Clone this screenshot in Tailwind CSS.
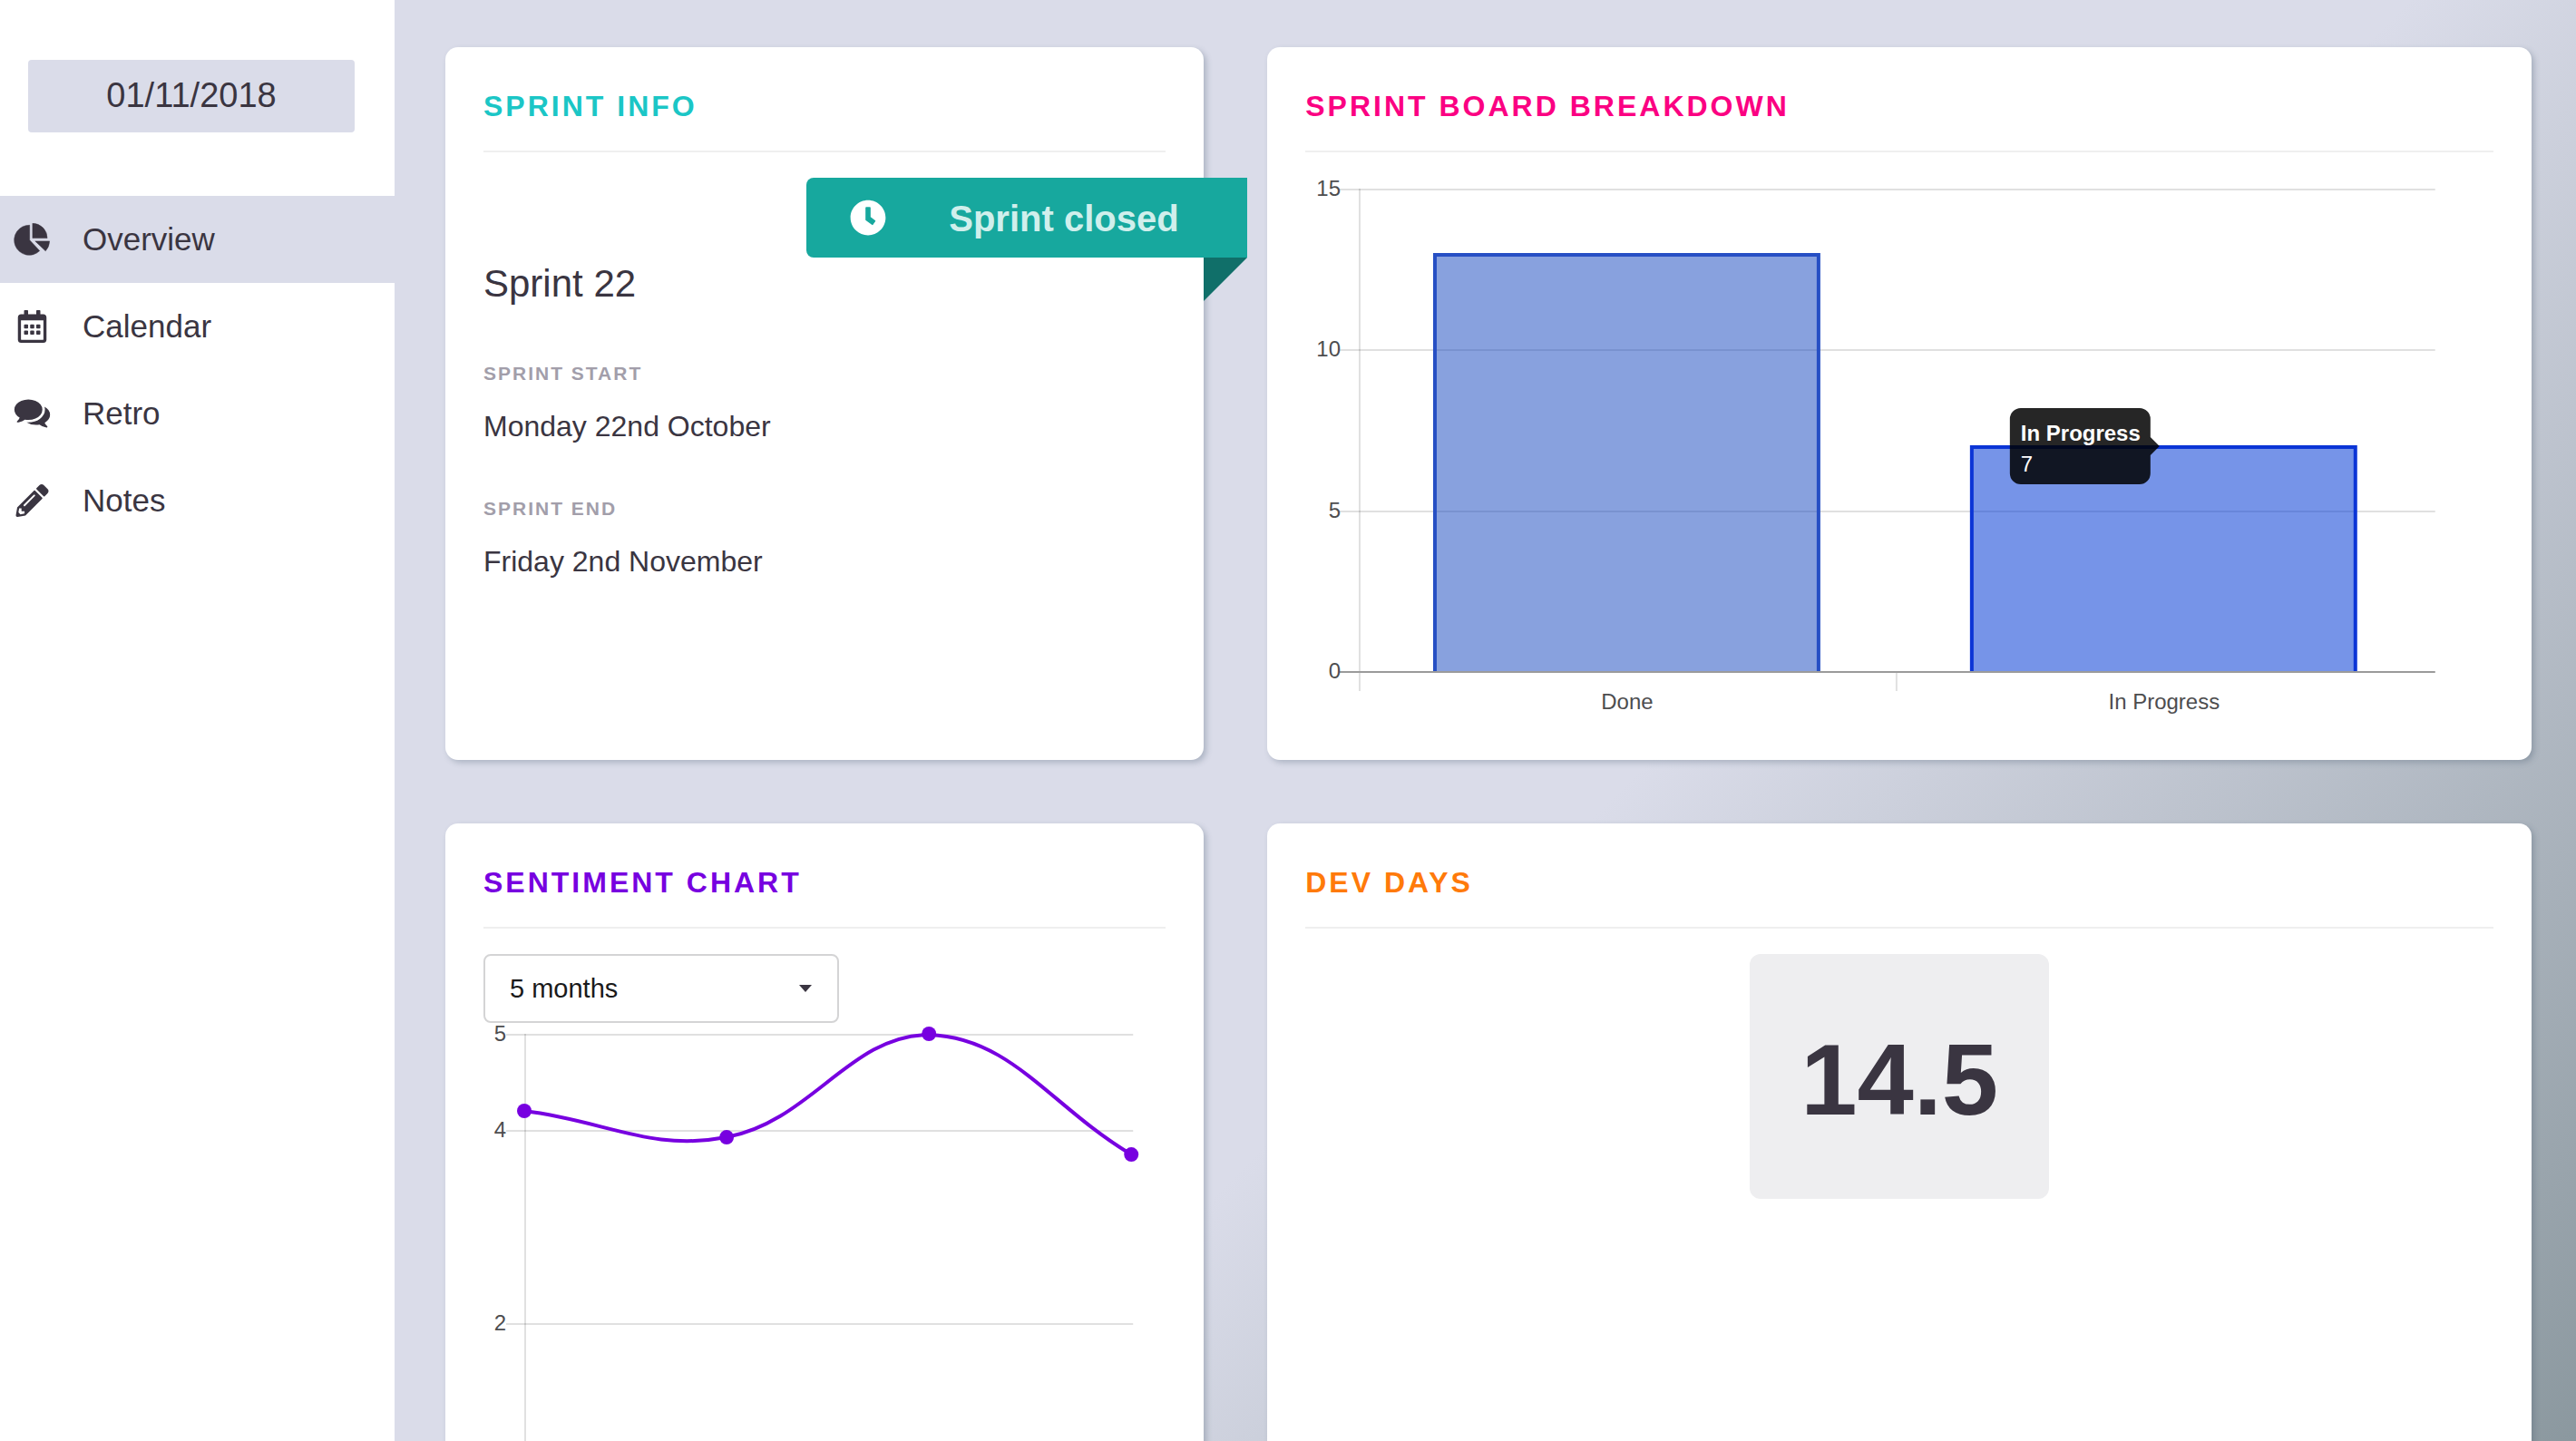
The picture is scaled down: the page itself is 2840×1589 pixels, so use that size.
<!DOCTYPE html>
<html lang="en">
<head>
<meta charset="utf-8">
<meta name="viewport" content="width=device-width, initial-scale=1">
<title>Sprint dashboard</title>
<script src="https://cdn.jsdelivr.net/npm/@tailwindcss/browser@4"></script>
</head>
<body class="flex h-screen overflow-hidden bg-[linear-gradient(135deg,#dadce9_60%,#8b989f_100%)] font-['Liberation_Sans',Arial,sans-serif] text-[#3a3541]">

<aside class="w-[435px] shrink-0 bg-white pt-[66px]">
  <div class="px-[31px] pr-[44px]">
    <input type="text" value="01/11/2018" aria-label="Date" class="block h-20 w-full rounded bg-[#dadce9] pb-0.5 text-center text-[38px]">
  </div>
  <nav class="mt-[70px] text-[35px]">
    <a href="#overview" class="flex h-24 items-center gap-[33px] bg-[#dadce9] pl-[13px]">
      <svg class="h-9 w-[45px]" viewBox="0 0 39 36" fill="currentColor" stroke="currentColor" stroke-width=".5" stroke-linejoin="round" aria-hidden="true"><path d="M16.700 2.300V18.800L27.700 30.600A16.500 16.500 0 1 1 16.700 2.300zM19.900.3V16.600H36.100A16.300 16.300 0 0 0 19.900.3zM22.800 19.900H38.600A17 17 0 0 1 34.200 30.800z"/></svg>
      <span>Overview</span>
    </a>
    <a href="#calendar" class="flex h-24 items-center gap-[33px] pl-[13px]">
      <svg class="h-9 w-[45px]" viewBox="0 0 448 512" fill="currentColor" aria-hidden="true"><path d="M148 288h-40c-6.600 0-12-5.400-12-12v-40c0-6.600 5.400-12 12-12h40c6.600 0 12 5.400 12 12v40c0 6.600-5.400 12-12 12zm108-12v-40c0-6.600-5.400-12-12-12h-40c-6.600 0-12 5.400-12 12v40c0 6.600 5.400 12 12 12h40c6.600 0 12-5.400 12-12zm96 0v-40c0-6.600-5.400-12-12-12h-40c-6.600 0-12 5.400-12 12v40c0 6.600 5.400 12 12 12h40c6.600 0 12-5.400 12-12zm-96 96v-40c0-6.600-5.400-12-12-12h-40c-6.600 0-12 5.400-12 12v40c0 6.600 5.400 12 12 12h40c6.600 0 12-5.400 12-12zm-96 0v-40c0-6.600-5.400-12-12-12h-40c-6.600 0-12 5.400-12 12v40c0 6.600 5.400 12 12 12h40c6.600 0 12-5.400 12-12zm192 0v-40c0-6.600-5.400-12-12-12h-40c-6.600 0-12 5.400-12 12v40c0 6.600 5.400 12 12 12h40c6.600 0 12-5.400 12-12zm96-260v352c0 26.500-21.500 48-48 48H48c-26.500 0-48-21.500-48-48V112c0-26.500 21.500-48 48-48h48V12c0-6.600 5.400-12 12-12h40c6.600 0 12 5.400 12 12v52h128V12c0-6.600 5.400-12 12-12h40c6.600 0 12 5.400 12 12v52h48c26.500 0 48 21.500 48 48zm-48 346V160H48v298c0 3.300 2.700 6 6 6h340c3.300 0 6-2.700 6-6z"/></svg>
      <span>Calendar</span>
    </a>
    <a href="#retro" class="flex h-24 items-center gap-[33px] pl-[13px]">
      <svg class="h-9 w-[45px]" viewBox="0 141 1792 1640" fill="currentColor" aria-hidden="true"><path d="M1408 768q0 139-94 257t-256.500 186.500-353.500 68.500q-86 0-176-16-124 88-278 128-36 9-86 16h-3q-11 0-20.500-8t-11.500-21q-1-3-1-6.500t.5-6.500 2-6l2.500-5 3.500-5.500 4-5 4.500-5 4-4.500q5-6 23-25t26-29.500 22.500-29 25-38.500 20.500-44q-124-72-195-177t-71-224q0-139 94-257t256.500-186.500 353.500-68.500 353.500 68.500 256.500 186.500 94 257zm384 256q0 120-71 224.500t-195 176.500q10 24 20.500 44t25 38.500 22.500 29 26 29.500 23 25q1 1 4 4.500t4.500 5 4 5 3.500 5.500l2.500 5 2 6 .5 6.500-1 6.500q-3 14-13 22t-22 7q-50-7-86-16-154-40-278-128-90 16-176 16-271 0-472-132 58 4 88 4 161 0 309-45t264-129q125-92 192-212t67-254q0-77-23-152 129 71 204 178t75 230z"/></svg>
      <span>Retro</span>
    </a>
    <a href="#notes" class="flex h-24 items-center gap-[33px] pl-[13px]">
      <svg class="h-9 w-[45px]" viewBox="0 0 512 512" fill="currentColor" aria-hidden="true"><path d="M497.900 142.100l-46.100 46.100c-4.700 4.700-12.300 4.700-17 0l-111-111c-4.700-4.700-4.700-12.300 0-17l46.100-46.100c18.700-18.700 49.100-18.700 67.900 0l60.100 60.100c18.800 18.700 18.800 49.100 0 67.900zM284.200 99.800L21.600 362.400.4 483.900c-2.900 16.400 11.400 30.600 27.800 27.800l121.500-21.300 262.600-262.600c4.700-4.700 4.700-12.300 0-17l-111-111c-4.800-4.700-12.400-4.700-17.100 0zM124.100 339.900c-5.500-5.500-5.500-14.300 0-19.800l154-154c5.500-5.500 14.300-5.500 19.800 0s5.500 14.300 0 19.800l-154 154c-5.500 5.500-14.300 5.500-19.800 0zM88 424h48v36.300l-64.500 11.300-31.100-31.100L51.700 376H88v48z"/></svg>
      <span>Notes</span>
    </a>
  </nav>
</aside>

<main class="grid min-w-0 flex-1 grid-cols-[3fr_5fr] content-start gap-[70px] pt-[52px] pr-[49px] pl-14">

  <section class="relative rounded-[14px] bg-white p-[42px] shadow-[3px_3px_6px_rgba(70,90,110,0.3)]">
    <h2 class="border-b-2 border-[#efefef] pb-[26px] text-[32px] leading-[46px] font-bold tracking-[3px] text-[#1bc6c6]">SPRINT INFO</h2>
    <p class="mt-[120px] text-[42px] leading-[50px]">Sprint 22</p>
    <dl class="mt-[62px]">
      <dt class="text-[21px] leading-6 font-bold tracking-[2px] text-[#a29eaa]">SPRINT START</dt>
      <dd class="mt-[26px] text-[32px] leading-10">Monday 22nd October</dd>
      <dt class="mt-[59px] text-[21px] leading-6 font-bold tracking-[2px] text-[#a29eaa]">SPRINT END</dt>
      <dd class="mt-[26px] text-[32px] leading-10">Friday 2nd November</dd>
    </dl>
    <div class="absolute top-36 -right-12 flex h-[88px] w-[486px] items-center rounded-l-lg bg-[#17a89e] pl-12">
      <svg class="size-10" viewBox="0 0 512 512" fill="#fff" aria-hidden="true"><path d="M256,8C119,8,8,119,8,256S119,504,256,504,504,393,504,256,393,8,256,8Zm57.100,350.100L224.900,294c-3.100-2.300-4.900-5.900-4.900-9.700V116a12,12,0,0,1,12-12h48a12,12,0,0,1,12,12V247.700l63.500,46.200a12,12,0,0,1,2.600,16.800l-28.200,38.800A12,12,0,0,1,313.100,358.100Z"/></svg>
      <span class="ml-[69px] pt-0.5 text-[40px] font-bold text-[#d0efec]">Sprint closed</span>
      <svg class="absolute top-full right-0 size-12" viewBox="0 0 48 48" aria-hidden="true"><path d="M0 0h48L0 48z" fill="#106f69"/></svg>
    </div>
  </section>

  <section class="rounded-[14px] bg-white p-[42px] shadow-[3px_3px_6px_rgba(70,90,110,0.3)]">
    <h2 class="border-b-2 border-[#efefef] pb-[26px] text-[32px] leading-[46px] font-bold tracking-[3px] text-[#fb0082]">SPRINT BOARD BREAKDOWN</h2>
    <svg class="block h-auto w-full text-[24px]" viewBox="0 0 1310 628" role="img" aria-label="Sprint board breakdown bar chart">
      <g stroke="#000" stroke-opacity=".12" stroke-width="2">
        <path d="M38 41H1246M38 218H1246M38 396H1246"/>
        <path d="M60 40V594M652 574V594"/>
      </g>
      <path d="M38 573H1246" stroke="#9b9b9b" stroke-width="2"/>
      <g fill="#4d4d4f" text-anchor="end">
        <text x="39" y="48">15</text><text x="39" y="225">10</text><text x="39" y="403">5</text><text x="39" y="580">0</text>
      </g>
      <g fill="#4d4d4f" text-anchor="middle">
        <text x="355" y="614">Done</text><text x="947" y="614">In Progress</text>
      </g>
      <path d="M143 572V113H566V572" fill="#1244be" fill-opacity=".5" stroke="#264fc4" stroke-width="4"/>
      <path d="M735 572V325H1158V572" fill="#0239d4" fill-opacity=".54" stroke="#0b35d6" stroke-width="4"/>
      <path d="M789 282h131a12 12 0 0 1 12 12v20l10 10-10 10v20a12 12 0 0 1-12 12H789a12 12 0 0 1-12-12V294a12 12 0 0 1 12-12z" fill="#000" fill-opacity=".85"/>
      <text x="789" y="318" fill="#fff" class="font-bold">In Progress</text>
      <text x="789" y="352" fill="#fff">7</text>
    </svg>
  </section>

  <section class="rounded-[14px] bg-white p-[42px] shadow-[3px_3px_6px_rgba(70,90,110,0.3)]">
    <h2 class="border-b-2 border-[#efefef] pb-[26px] text-[32px] leading-[46px] font-bold tracking-[3px] text-[#7700e0]">SENTIMENT CHART</h2>
    <div class="relative mt-7 w-[392px]">
      <select aria-label="Period" class="block h-[76px] w-full appearance-none rounded-lg border-2 border-[#d4d4d5] bg-white pt-0.5 pl-[27px] text-[29px] text-[#1a1a1b]">
        <option selected>5 months</option>
        <option>12 months</option>
      </select>
      <svg class="pointer-events-none absolute top-[34px] right-[30px] h-2 w-3.5" viewBox="0 0 14 8" aria-hidden="true"><path d="M0 0h14L7 8z" fill="#3a3541"/></svg>
    </div>
    <svg class="block h-auto w-full overflow-visible text-[24px]" viewBox="0 0 752 600" role="img" aria-label="Sentiment over time">
      <g stroke="#000" stroke-opacity=".12" stroke-width="2">
        <path d="M25 13H716M25 119H716M25 332H716M25 545H716"/>
        <path d="M46 12V566"/>
      </g>
      <g fill="#4d4d4f" text-anchor="end">
        <text x="25" y="20">5</text><text x="25" y="126">4</text><text x="25" y="339">2</text>
      </g>
      <path d="M45 97C135 108 184 142 268 126C362 108 404 13 491 13C582 16 625 92 714 145" fill="none" stroke="#7700e0" stroke-width="4"/>
      <g fill="#7700e0">
        <circle cx="45" cy="97" r="8"/><circle cx="268" cy="126" r="8"/><circle cx="491" cy="12" r="8"/><circle cx="714" cy="145" r="8"/>
      </g>
    </svg>
  </section>

  <section class="rounded-[14px] bg-white p-[42px] shadow-[3px_3px_6px_rgba(70,90,110,0.3)]">
    <h2 class="border-b-2 border-[#efefef] pb-[26px] text-[32px] leading-[46px] font-bold tracking-[3px] text-[#ff7a0a]">DEV DAYS</h2>
    <div class="mx-auto mt-7 w-fit rounded-xl bg-[#eeeef0] px-14 pt-[74px] pb-[66px] text-[112px] leading-[130px] font-bold">14.5</div>
  </section>

</main>
</body>
</html>
